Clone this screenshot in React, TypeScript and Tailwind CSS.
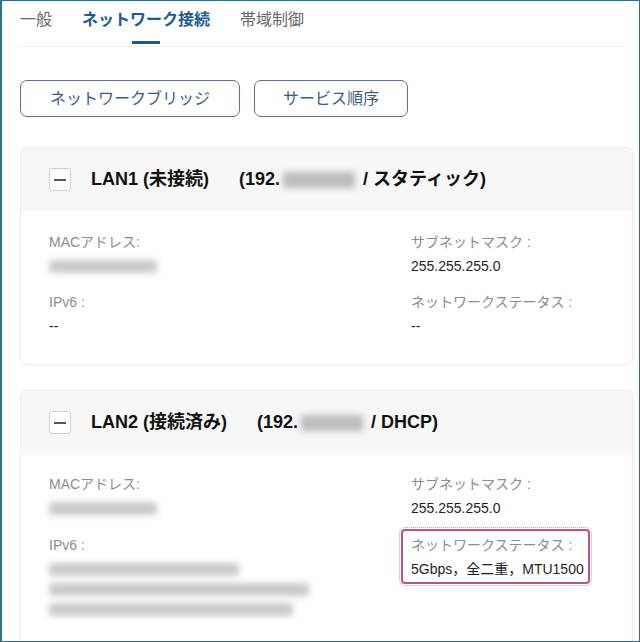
const font = { fontFamily: '"Liberation Sans", "Noto Sans CJK JP", sans-serif' }

function Blur({ w, className = '' }: { w: number; className?: string }) {
  return (
    <div className={`h-[22px] flex items-center ${className}`}>
      <div className="h-[13px] rounded-sm bg-[#cacaca] blur-[3px]" style={{ width: w }} />
    </div>
  )
}

function Field({ label, children }: { label: string; children: React.ReactNode }) {
  return (
    <div className="flex flex-col gap-[2px]">
      <div className="h-[22px] leading-[22px] text-[14px] text-[#8c8c8c]">{label}</div>
      {children}
    </div>
  )
}

function Value({ text }: { text: string }) {
  return <div className="h-[22px] leading-[22px] text-[14px] text-[#1e1e1e]">{text}</div>
}

function CardHeader({ title, ipBlur, mode }: { title: string; ipBlur: number; mode: string }) {
  return (
    <div className="h-[63px] bg-[#f7f7f7] flex items-center pl-[28px] rounded-t-[6px]">
      <div className="w-[22px] h-[23px] border border-[#cfcfcf] rounded-[3px] bg-white flex items-center justify-center">
        <div className="w-[12px] h-[2px] bg-[#555]" />
      </div>
      <div className="ml-[20px] text-[18px] font-bold text-[#111]">{title}</div>
      <div className="ml-[30px] flex items-center text-[18px] font-bold text-[#111]">
        <span>(192.</span>
        <div className="h-[16px] bg-[#bdbdbd] blur-[3px] mx-[3px]" style={{ width: ipBlur }} />
        <span>&nbsp;/ {mode})</span>
      </div>
    </div>
  )
}

export default function App() {
  return (
    <div
      className="w-[640px] h-[642px] bg-white border border-l-2 border-[#2e6d94] overflow-hidden pl-[18px] pr-[4px]"
      style={font}
    >
      {/* Tabs */}
      <div className="h-[46px] border-b border-[#efefef] mr-[12px] flex items-start pt-[7px] gap-[30px] text-[16px]">
        <div className="leading-[24px] text-[#666]">一般</div>
        <div className="relative leading-[24px] font-bold text-[#1d5a96]">
          ネットワーク接続
          <div className="absolute left-1/2 -translate-x-1/2 top-[33px] w-[28px] h-[3px] bg-[#1d5a96]" />
        </div>
        <div className="leading-[24px] text-[#666]">帯域制御</div>
      </div>

      {/* Buttons */}
      <div className="flex gap-[14px] mt-[33px]">
        <button className="w-[220px] h-[37px] border border-[#5f7189] rounded-[7px] text-[16px] text-[#3d5b7e]">
          ネットワークブリッジ
        </button>
        <button className="w-[154px] h-[37px] border border-[#5f7189] rounded-[7px] text-[16px] text-[#3d5b7e]">
          サービス順序
        </button>
      </div>

      {/* LAN1 */}
      <div className="mt-[30px] w-[613px] border border-[#ececec] rounded-[6px]">
        <CardHeader title="LAN1 (未接続)" ipBlur={72} mode="スタティック" />
        <div className="grid grid-cols-[362px_1fr] gap-y-[14px] pl-[28px] pt-[20px] pb-[27px]">
          <Field label="MACアドレス:">
            <Blur w={108} />
          </Field>
          <Field label="サブネットマスク :">
            <Value text="255.255.255.0" />
          </Field>
          <Field label="IPv6 :">
            <Value text="--" />
          </Field>
          <Field label="ネットワークステータス :">
            <Value text="--" />
          </Field>
        </div>
      </div>

      {/* LAN2 */}
      <div className="mt-[25px] w-[613px] border border-[#ececec] rounded-[6px]">
        <CardHeader title="LAN2 (接続済み)" ipBlur={62} mode="DHCP" />
        <div className="grid grid-cols-[362px_1fr] gap-y-[15px] pl-[28px] pt-[19px] pb-[40px]">
          <Field label="MACアドレス:">
            <Blur w={108} />
          </Field>
          <Field label="サブネットマスク :">
            <Value text="255.255.255.0" />
          </Field>
          <Field label="IPv6 :">
            <div className="flex flex-col pt-[1px]">
              <Blur w={190} className="!h-[20px]" />
              <Blur w={260} className="!h-[20px]" />
              <Blur w={244} className="!h-[20px]" />
            </div>
          </Field>
          <div className="relative w-fit self-start">
            <div className="absolute -left-[10px] -right-[6px] -top-[5px] -bottom-[4px] border-2 border-[#c4507f] rounded-[4px] outline-1 outline-dotted outline-[#dc9ab4] outline-offset-1" />
            <Field label="ネットワークステータス :">
              <Value text="5Gbps，全二重，MTU1500" />
            </Field>
          </div>
        </div>
      </div>
    </div>
  )
}
